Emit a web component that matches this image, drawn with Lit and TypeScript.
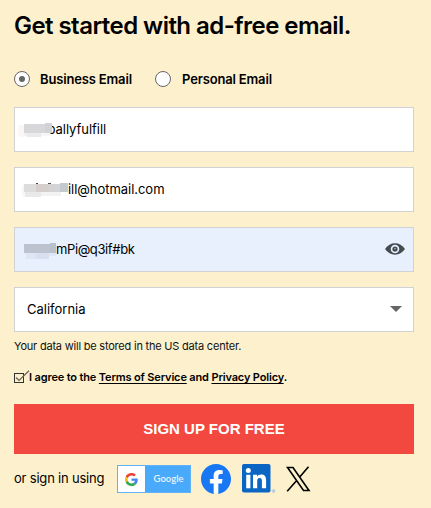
import { LitElement, html, svg, css } from "lit";
import { customElement } from "lit/decorators.js";

@customElement("masked-field")
class MaskedField extends LitElement {
  static properties = { value: {}, kind: {} };
  declare value: string;
  declare kind: string;

  static styles = css`
    :host { display: block; position: relative; line-height: 20px; white-space: nowrap; flex: 1; }
    .value { display: block; }
    .user { padding-left: 12px; letter-spacing: -0.04px; }
    .mail { padding-left: 53px; letter-spacing: -0.04px; }
    .pass { padding-left: 41px; letter-spacing: -0.38px; }
    svg { position: absolute; left: 0; top: 0; width: 60px; height: 24px; }
  `;

  private mosaic() {
    if (this.kind === "user") {
      return svg`
        <rect x="3" y="6" width="7" height="12" fill="#faf7f4"/>
        <rect x="9" y="5" width="28" height="9" fill="#d7d7d9"/>
        <rect x="30" y="4" width="7" height="10" fill="#d2d2d5"/>
        <rect x="9" y="14" width="3" height="3" fill="#f0f0f0"/>
        <rect x="12" y="14" width="14" height="4" fill="#eaeaec"/>
        <rect x="26" y="14" width="9" height="3" fill="#f6f6f6"/>`;
    }
    if (this.kind === "mail") {
      return svg`
        <rect x="7" y="6" width="3" height="11" fill="#f8f7f6"/>
        <rect x="21" y="4" width="2" height="2" fill="#444"/>
        <rect x="33" y="4" width="3" height="1" fill="#555"/>
        <rect x="9" y="5" width="12" height="8" fill="#dcdcdc"/>
        <rect x="21" y="5" width="18" height="8" fill="#d5cecd"/>
        <rect x="34" y="5" width="12" height="8" fill="#d3d4d5"/>
        <rect x="45" y="4" width="8" height="9" fill="#c3cacf"/>
        <rect x="10" y="13" width="16" height="5" fill="#e9e9e9"/>
        <rect x="26" y="13" width="20" height="4" fill="#f2f2f2"/>`;
    }
    return svg`
      <rect x="9" y="5" width="26" height="9" fill="#bdc2cf"/>
      <rect x="35" y="4" width="6" height="10" fill="#b9c0d0"/>
      <rect x="11" y="14" width="11" height="6" fill="#dfe5f4"/>
      <rect x="21" y="14" width="13" height="6" fill="#d8dfef"/>
      <rect x="34" y="14" width="7" height="3" fill="#dfe6f6"/>`;
  }

  render() {
    return html`<span class="value ${this.kind}">${this.value}</span>
      <svg viewBox="0 0 60 24" shape-rendering="crispEdges">${this.mosaic()}</svg>`;
  }
}

@customElement("app-root")
class AppRoot extends LitElement {
  static styles = css`
    :host { display: block; box-sizing: border-box; width: 431px; height: 508px; overflow: hidden;
      background: #fdf0cd; color: #000; padding: 10px 17px 0 14px;
      font-family: Inter, "Liberation Sans", sans-serif; font-size: 13px; }
    * { box-sizing: border-box; }
    svg { display: block; flex: none; }
    h1 { margin: 0; font-size: 24px; line-height: 32px; font-weight: 600; letter-spacing: -0.55px; white-space: nowrap; }
    .kinds { display: flex; align-items: center; height: 20px; margin-top: 27px; font-weight: 600; white-space: nowrap; }
    .radio { width: 16px; height: 16px; border: 1px solid #666; border-radius: 50%; background: #fff; flex: none; display: grid; place-items: center; }
    .dot { width: 6px; height: 6px; border-radius: 50%; background: #666; }
    .business { margin-left: 10px; width: 115px; letter-spacing: -0.16px; padding-bottom: 1px; }
    .personal { margin-left: 11px; letter-spacing: -0.16px; padding-bottom: 1px; }
    .form { display: grid; gap: 15px; margin-top: 18px; }
    .field { height: 45px; border: 1px solid #d0d2d6; background: #fff; display: flex; align-items: center; padding-bottom: 2px; }
    .filled { background: #e8f0fe; }
    .state { padding-left: 12px; flex: 1; }
    .eye { margin-right: 8px; }
    .arrow { margin-right: 11px; }
    .note { margin-top: 6px; font-size: 11px; line-height: 16px; white-space: nowrap; color: #111; letter-spacing: -0.21px; }
    .agree { display: flex; align-items: center; height: 18px; margin-top: 14px; font-size: 11px; font-weight: 600; white-space: nowrap; letter-spacing: -0.15px; }
    .agree svg { margin-right: -1px; }
    .link { text-decoration: underline; text-underline-offset: 2px; text-decoration-thickness: 1px; }
    .submit { display: block; width: 100%; height: 50px; margin: 18px 0 0; padding: 0; border: 0; background: #f24840; color: #fff;
      font: bold 15px/50px "Liberation Sans", sans-serif; text-align: center; }
    .social { display: flex; align-items: center; height: 32px; margin-top: 9px; }
    .using { width: 103px; white-space: nowrap; padding-bottom: 3px; letter-spacing: -0.2px; }
    .google { width: 74px; height: 28px; border: 1px solid #62b3f5; background: #49a9fb; display: flex; align-items: center; }
    .gbox { width: 27px; height: 26px; background: #fff; display: grid; place-items: center; }
    .gname { flex: 1; padding-left: 2px; text-align: center; color: #f2f9ff; font: 500 9.5px/26px Lato, sans-serif; }
    .fb { margin-left: 10px; }
    .in { margin-left: 10px; }
    .x { margin-left: 10px; }
  `;

  render() {
    return html`
      <h1>Get started with ad-free email.</h1>
      <div class="kinds">
        <span class="radio"><span class="dot"></span></span><span class="business">Business Email</span>
        <span class="radio"></span><span class="personal">Personal Email</span>
      </div>
      <div class="form">
        <div class="field"><masked-field kind="user" value="Globallyfulfill"></masked-field></div>
        <div class="field"><masked-field kind="mail" value="ill@hotmail.com"></masked-field></div>
        <div class="field filled">
          <masked-field kind="pass" value="mPi@q3if#bk"></masked-field>
          <svg class="eye" width="20" height="12" viewBox="0 0 20 12">
            <path d="M0 6Q4 .3 10 .3T20 6Q16 11.7 10 11.7T0 6Z" fill="#444b4f"/>
            <circle cx="10" cy="6" r="4.3" fill="#e8f0fe"/><circle cx="10" cy="6" r="2.6" fill="#444b4f"/>
            <circle cx="10" cy="5.6" r=".8" fill="#aeb5bd"/>
          </svg>
        </div>
        <div class="field">
          <span class="state">California</span>
          <svg class="arrow" width="12" height="6" viewBox="0 0 12 6"><path d="M0 0H12L6 6Z" fill="#666"/></svg>
        </div>
      </div>
      <div class="note">Your data will be stored in the US data center.</div>
      <div class="agree">
        <svg width="16" height="14" viewBox="0 0 16 14"><rect x=".5" y="3.5" width="9" height="9" fill="none" stroke="#333"/><path d="M2 7.5L5 10.5L15 .8" fill="none" stroke="#666457" stroke-width="1.2"/></svg>
        <span>I agree to the <span class="link">Terms of Service</span> and <span class="link">Privacy Policy</span>.</span>
      </div>
      <button class="submit">SIGN UP FOR FREE</button>
      <div class="social">
        <span class="using">or sign in using</span>
        <div class="google">
          <span class="gbox"><svg width="13" height="13" viewBox="0 0 48 48">
            <path fill="#EA4335" d="M24 9.5c3.54 0 6.71 1.22 9.21 3.6l6.85-6.85C35.9 2.38 30.47 0 24 0 14.62 0 6.51 5.38 2.56 13.22l7.98 6.19C12.43 13.72 17.74 9.5 24 9.5z"/>
            <path fill="#4285F4" d="M46.98 24.55c0-1.57-.15-3.09-.38-4.55H24v9.02h12.94c-.58 2.96-2.26 5.48-4.78 7.18l7.73 6c4.51-4.18 7.09-10.36 7.09-17.65z"/>
            <path fill="#FBBC05" d="M10.53 28.59A14.5 14.5 0 0 1 10.53 19.41L2.56 13.22A24 24 0 0 0 2.56 34.78z"/>
            <path fill="#34A853" d="M24 48c6.48 0 11.93-2.13 15.89-5.81l-7.73-6c-2.15 1.45-4.92 2.3-8.16 2.3-6.26 0-11.57-4.22-13.47-9.91l-7.98 6.19C6.51 42.62 14.62 48 24 48z"/>
          </svg></span>
          <span class="gname">Google</span>
        </div>
        <svg class="fb" width="30" height="30" viewBox="0 0 24 24"><path fill="#fff" d="M8 5h10v18H8z"/><path fill="#1877f2" d="M24 12.07C24 5.4 18.63 0 12 0S0 5.4 0 12.07c0 6.03 4.39 11.03 10.13 11.93v-8.44H7.08v-3.49h3.05V9.41c0-3.03 1.79-4.7 4.53-4.7 1.31 0 2.68.24 2.68.24v2.97h-1.51c-1.49 0-1.96.93-1.96 1.89v2.26h3.33l-.53 3.49h-2.8V24C19.61 23.1 24 18.1 24 12.07z"/></svg>
        <svg class="in" width="35" height="30" viewBox="0 0 35 30">
          <rect x="1" y="0" width="28.5" height="28.5" rx="2" fill="#0a66c2"/>
          <circle cx="7.3" cy="6.6" r="2.5" fill="#fff"/><path d="M5.2 10.8h4.2V24.3H5.2z" fill="#fff"/>
          <path d="M12 10.8h4v1.9c.7-1.3 2.2-2.2 4.2-2.2 4 0 4.9 2.6 4.9 6.3v7.5h-4.2v-6.7c0-1.8-.2-3.5-2.3-3.5-2 0-2.4 1.6-2.4 3.4v6.8H12z" fill="#fff"/>
          <path d="M32.5 24.5l2.3 2.5-2.3 2.5-2.3-2.5z" fill="#b9cfe0"/>
        </svg>
        <svg class="x" width="25" height="26" viewBox="0 0 25 26"><path d="M1.5 1.5H7L23 24.5H17.5ZM22.5 .8L13.3 11.5M10.5 14.7L1.2 25.2" fill="none" stroke="#000" stroke-width="1.6"/></svg>
      </div>`;
  }
}
